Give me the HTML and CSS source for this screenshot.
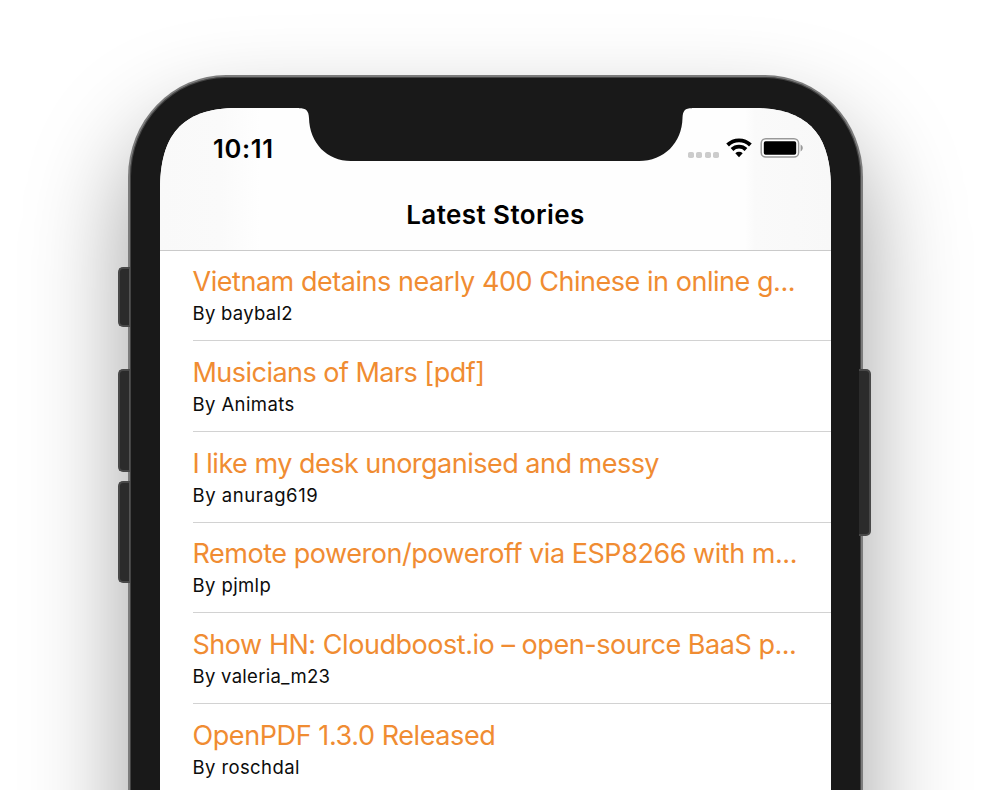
FILE: index.html
```html
<!DOCTYPE html>
<html lang="en">
<head>
<meta charset="utf-8">
<title>Latest Stories</title>
<link rel="stylesheet" href="styles.css">
</head>
<body>
<div class="stage">
<div class="phone">
  <span class="key key-mute"></span>
  <span class="key key-up"></span>
  <span class="key key-down"></span>
  <span class="key key-power"></span>
  <main class="screen">
    <header class="navbar">
      <div class="status">
        <time class="clock">10:11</time>
        <div class="indicators">
          <span class="signal"><i></i><i></i><i></i><i></i></span>
          <svg class="wifi" viewBox="0 0 26 20" width="26" height="20">
            <g fill="none" stroke="#000" stroke-width="3.900">
              <path d="M1.600 7A16.300 16.300 0 0 1 24.400 7"/>
              <path d="M6 11.500A10 10 0 0 1 20 11.500"/>
            </g>
            <path d="M9.300 15.300a5.400 5.400 0 0 1 7.400 0L13 19.300z"/>
          </svg>
          <svg class="battery" viewBox="0 0 44 22" width="44" height="22">
            <rect x="1.200" y="1.700" width="37.400" height="18.400" rx="4.600" fill="#fff" stroke="#999" stroke-width="1.500"/>
            <rect x="3.800" y="4.200" width="32.400" height="13.600" rx="1.800"/>
            <path d="M40.600 7.600c2.900 1.400 2.900 5.400 0 6.800z" fill="#999"/>
          </svg>
        </div>
      </div>
      <h1>Latest Stories</h1>
    </header>
    <ul class="stories">
      <li class="vietnam"><h2>Vietnam detains nearly 400 Chinese in online g...</h2><p>By baybal2</p></li>
      <li class="mars"><h2>Musicians of Mars [pdf]</h2><p>By Animats</p></li>
      <li class="desk"><h2>I like my desk unorganised and messy</h2><p>By anurag619</p></li>
      <li class="remote"><h2>Remote poweron/poweroff via ESP8266 with m...</h2><p>By pjmlp</p></li>
      <li class="show"><h2>Show HN: Cloudboost.io – open-source BaaS p...</h2><p>By valeria_m23</p></li>
      <li class="pdf"><h2>OpenPDF 1.3.0 Released</h2><p>By roschdal</p></li>
    </ul>
  </main>
  <svg class="notch" viewBox="0 0 393 55" width="393" height="55">
    <path d="M0 0H393V2.200C386 2.200 383.800 4.500 383.500 12C383 37 365 55 340 55H52C28 55 10.500 37 10 12C9.700 4.500 7 2.200 0 2.200Z" fill="#191919"/>
  </svg>
</div>
</div>
</body>
</html>
```
FILE: styles.css
```css
* { box-sizing: border-box; margin: 0; padding: 0; }
body { background: #fff; font-family: Inter, "Liberation Sans", sans-serif; color: #000; }
.stage {
  height: 790px;
  overflow: hidden;
  padding: 75px 127.500px 0 128px;
}
.phone {
  position: relative;
  height: 900px;
  padding: 31px 29.500px 0 30px;
  border: 2px solid #7c7c7c;
  border-bottom: 0;
  border-radius: 98px 98px 0 0 / 102px 102px 0 0;
  background: #191919;
  box-shadow: inset 0 0 0 1px #444, 0 50px 100px rgba(0, 0, 0, .38);
}
.screen {
  height: 682px;
  clip-path: path("M0 82C0 29 20 0 78 0H593C651 0 671 29 671 82V682H0Z");
  background: #fff;
  overflow: hidden;
}
.navbar {
  height: 142.500px;
  padding: 25px 27.300px 0 53px;
  border-bottom: 1px solid #cacaca;
  background: linear-gradient(90deg, #f9f9f9 0, #fafafa 60px, #fefefe 100px, #fefefe 585px, #fafafa 595px, #f8f8f8 100%);
}
.status { display: flex; justify-content: space-between; align-items: center; height: 30px; }
.clock { font-size: 25.500px; font-weight: 600; letter-spacing: .7px; }
.indicators { display: flex; align-items: center; }
.signal { display: flex; gap: 2.200px; margin: 13px 7px 0 0; }
.signal i { width: 6px; height: 6px; border-radius: 1.800px; background: #ccc; }
.wifi { margin-right: 8px; }
h1 { margin: 35px 0 0 -25.700px; text-align: center; font-size: 26px; line-height: 34px; font-weight: 600; letter-spacing: .43px; }
.stories { list-style: none; padding-left: 32.500px; }
.stories li { height: 90.700px; padding-top: 13.700px; border-bottom: 1px solid #d2d2d2; white-space: nowrap; }
.stories h2 { font-size: 27px; line-height: 36px; font-weight: 400; color: #f08c32; letter-spacing: -.46px; }
.stories p { font-size: 18.500px; line-height: 26px; color: #0c0c0c; letter-spacing: .4px; }
.vietnam p, .show p { letter-spacing: .28px; }
.mars h2 { letter-spacing: -.53px; }
.desk h2 { letter-spacing: -.51px; }
.pdf h2 { letter-spacing: -.41px; }
.desk p { letter-spacing: .55px; }
.notch { position: absolute; left: 169px; top: 29px; }
.key { position: absolute; left: -12px; width: 12px; background: #2b2b2b; border: 2px solid #484848; border-right: 1px solid #555; border-radius: 5px 0 0 5px; }
.key-mute { top: 190px; height: 60px; }
.key-up { top: 292px; height: 103px; }
.key-down { top: 404px; height: 102px; }
.key-power { left: auto; right: -10.500px; top: 292px; height: 167px; width: 12px; border: 2px solid #484848; border-left: 0; border-radius: 0 5px 5px 0; }
```
